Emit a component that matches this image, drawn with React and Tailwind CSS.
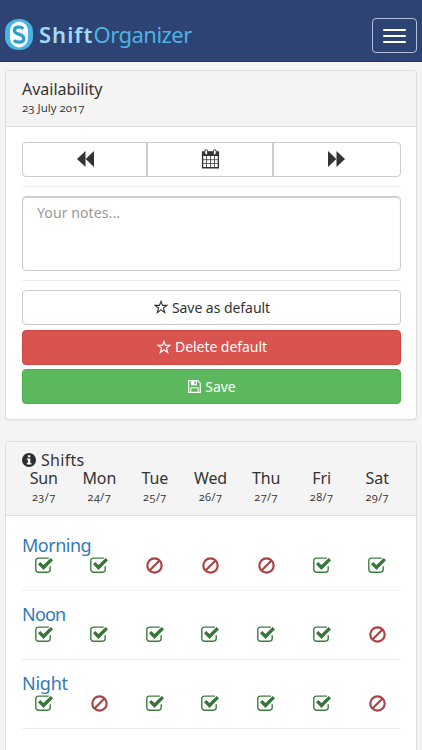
import { Fragment } from 'react';

const days = [
  { name: 'Sun', date: '23/7' },
  { name: 'Mon', date: '24/7' },
  { name: 'Tue', date: '25/7' },
  { name: 'Wed', date: '26/7' },
  { name: 'Thu', date: '27/7' },
  { name: 'Fri', date: '28/7' },
  { name: 'Sat', date: '29/7' },
];

const shifts = [
  { name: 'Morning', width: 'tracking-[-0.5px]', free: [true, true, false, false, false, true, true] },
  { name: 'Noon', width: 'tracking-[-0.8px]', free: [true, true, true, true, true, true, false] },
  { name: 'Night', width: 'tracking-[-0.25px]', free: [true, false, true, true, true, true, false] },
];

function LogoIcon() {
  return (
    <svg className="w-[28px] h-[31px] shrink-0" viewBox="0 0 28 31">
      <rect x="0" y="0" width="28" height="31" rx="13" fill="#48b4e4" />
      <rect x="5" y="2.5" width="18" height="26" rx="9" fill="#f4fbff" />
      <path d="M18.3 9.7C16.8 8.5 15.3 8 13.6 8c-2.6 0-4.2 1.3-4.2 3.4 0 4.7 9.4 3.2 9.4 8 0 2.4-2 3.8-4.8 3.8-2 0-3.8-.7-5.2-1.8" fill="none" stroke="#2d9dcb" strokeWidth="3.2" />
    </svg>
  );
}

function Backward({ className }) {
  return (
    <svg className={className} viewBox="0 0 17 16" fill="currentColor">
      <path d="M8.5 0v16L0 8zM17 0v16L8.7 8z" />
    </svg>
  );
}

function CalendarIcon() {
  return (
    <svg className="w-[19px] h-[20px] mb-[2px]" viewBox="0 0 20 20" preserveAspectRatio="none">
      <path d="M1.7 3h16.6v15.8H1.7z" fill="#fff" stroke="#333" strokeWidth="1.4" />
      <path d="M1 3h18v4H1z" fill="#333" />
      <path d="M5.8 7v11M10 7v11M14.2 7v11M1 10.7h18M1 14.4h18" stroke="#444" strokeWidth=".9" />
      <rect x="4" y=".7" width="3" height="5" rx="1.5" fill="#fff" stroke="#333" />
      <rect x="13" y=".7" width="3" height="5" rx="1.5" fill="#fff" stroke="#333" />
    </svg>
  );
}

function StarIcon() {
  return (
    <svg className="w-[14px] h-[14px] shrink-0" viewBox="0 0 14 14" fill="none" stroke="currentColor" strokeWidth="1.15">
      <path d="M7 1.4l1.5 4h4.4L9.4 8l1.3 4.5L7 9.9l-3.7 2.6L4.6 8 1.1 5.4h4.4z" />
    </svg>
  );
}

function SaveIcon() {
  return (
    <svg className="w-[13px] h-[13px] shrink-0" viewBox="0 0 13 13">
      <path d="M.7.7h9.1l2.5 2.5v9.1H.7z" fill="none" stroke="currentColor" strokeWidth="1.2" />
      <path d="M3 1h6v4.3H3z" fill="currentColor" />
      <path d="M6.5 1.5h1.4v2.8H6.5z" fill="#5cb85c" />
      <path d="M2.8 12V7.8h7.4V12" fill="none" stroke="currentColor" />
    </svg>
  );
}

function InfoIcon() {
  return (
    <svg className="w-[14px] h-[14px] shrink-0" viewBox="0 0 14 14">
      <circle cx="7" cy="7" r="7" fill="#2d2d2d" />
      <path d="M5.9 2.2h2.4v2H5.9zM4.8 5.4h3.5v4.7h1.1v1.5H4.8v-1.5h1.1V6.8H4.8z" fill="#fff" />
    </svg>
  );
}

function CheckIcon() {
  return (
    <svg className="w-[18px] h-[17px]" viewBox="0 0 18 17">
      <path d="M13.8 1.1H3.4A2.6 2.6 0 0 0 .8 3.7v8.9a2.6 2.6 0 0 0 2.6 2.6h9.2a2.6 2.6 0 0 0 2.6-2.6V9.2" fill="none" stroke="#3c7d40" strokeWidth="1.4" />
      <path d="M3 7.2l2.2-2.3 3.3 3 7.2-6.8L18 3.3l-9.5 9.6z" fill="#38753b" />
    </svg>
  );
}

function BanIcon() {
  return (
    <svg className="w-[17px] h-[17px]" viewBox="0 0 17 17" fill="none" stroke="#a94442" strokeWidth="2.2">
      <circle cx="8.5" cy="8.5" r="7.2" />
      <path d="M3.5 13.5l10-10" />
    </svg>
  );
}

export default function App() {
  return (
    <div className="h-[750px] overflow-hidden bg-[#f4f4f4] text-[#333] font-['Noto_Sans',sans-serif]">
      <header className="h-[62px] bg-[#2d4373] border-b border-[#293763] flex items-start justify-between pl-[5px] pr-[5px]">
        <div className="flex items-center pt-[19px]">
          <LogoIcon />
          <span className="ml-[6px] text-[22px] leading-[31px] text-[#50b2e2] whitespace-nowrap">
            <b className="font-semibold text-[#a1dafa] tracking-[1px]">Shift</b>
            <span className="tracking-[-0.52px]">Organizer</span>
          </span>
        </div>
        <button className="mt-[18px] w-[45px] h-[35px] rounded-[4px] border border-[#b3bfd8] flex flex-col items-center justify-center gap-[4px]">
          <span className="w-[23px] h-[2px] bg-white rounded-[1px]" />
          <span className="w-[23px] h-[2px] bg-white rounded-[1px]" />
          <span className="w-[23px] h-[2px] bg-white rounded-[1px]" />
        </button>
      </header>

      <section className="mt-[8px] ml-[5px] mr-[5px] h-[350px] rounded-[4px] border border-[#dedede] bg-white shadow-xs">
        <div className="h-[56px] rounded-t-[3px] bg-[#f4f4f4] border-b border-[#dedede] pl-[16px] pt-[8px]">
          <h3 className="text-[16px] leading-[21px] tracking-[-0.02px]">Availability</h3>
          <p className="font-['Open_Sans'] oldstyle-nums text-[11.5px] leading-[16px] tracking-[0.02px]">23 July 2017</p>
        </div>
        <div className="px-[15.5px] pt-[15px]">
          <div className="h-[35px] rounded-[4px] border border-[#ccc] grid grid-cols-3 divide-x-2 divide-[#ccc]">
            <button className="flex items-center justify-center pl-[2px]"><Backward className="w-[17px] h-[16px] mb-[2px]" /></button>
            <button className="flex items-center justify-center pl-px"><CalendarIcon /></button>
            <button className="flex items-center justify-center"><Backward className="w-[17px] h-[16px] mb-[2px] rotate-180" /></button>
          </div>
          <hr className="mt-[9px] border-[#eee]" />
          <textarea
            placeholder="Your notes..."
            className="mt-[9px] block w-full h-[75px] resize-none rounded-[4px] border border-[#ccc] shadow-[inset_0_1px_1px_#ccc] px-[14.5px] py-[6px] text-[14px] leading-[20px] tracking-[0.1px] placeholder:text-[#999]"
          />
          <hr className="mt-[9px] border-[#eee]" />
          <div className="mt-[9px] flex flex-col gap-[5px] text-[14px]">
            <button className="h-[35px] rounded-[4px] border border-[#ccc] bg-white flex items-center justify-center gap-[4px] pb-px pl-[2px] tracking-[-0.05px]">
              <StarIcon /> Save as default
            </button>
            <button className="h-[35px] rounded-[4px] border border-[#cf4541] bg-[#d9534f] text-white flex items-center justify-center gap-[4px] pb-[2px] pl-[2px] tracking-[-0.05px]">
              <StarIcon /> Delete default
            </button>
            <button className="-mt-px h-[35px] rounded-[4px] border border-[#4cae4c] bg-[#5cb85c] text-white flex items-center justify-center gap-[4px] pb-px pl-[2px] tracking-[-0.05px]">
              <SaveIcon /> Save
            </button>
          </div>
        </div>
      </section>

      <section className="mt-[21px] mx-[5px] h-[340px] rounded-t-[4px] border border-[#dedede] bg-white">
        <div className="h-[74px] rounded-t-[3px] bg-[#f4f4f4] border-b border-[#dedede] pt-[9px]">
          <div className="pl-[16px] h-[18px] flex items-center gap-[5px] text-[16px] leading-[18px] tracking-[0.3px]">
            <InfoIcon /> Shifts
          </div>
          <div className="ml-[10px] w-[389px] grid grid-cols-7 text-center">
            {days.map((d) => (
              <div key={d.name}>
                <div className="text-[16px] leading-[18px] tracking-[-0.1px]">{d.name}</div>
                <div className="font-['Open_Sans'] oldstyle-nums text-[11px] leading-[19px] tracking-[0.4px]">{d.date}</div>
              </div>
            ))}
          </div>
        </div>
        <div className="pt-[17px]">
          {shifts.map((s) => (
            <Fragment key={s.name}>
              <h4 className={`pl-[16px] h-[24px] text-[18px] leading-[24px] text-[#337ab7] ${s.width}`}>{s.name}</h4>
              <div className="ml-[10px] w-[389px] h-[17px] grid grid-cols-7 justify-items-center">
                {s.free.map((ok, i) => (ok ? <CheckIcon key={i} /> : <BanIcon key={i} />))}
              </div>
              <hr className="ml-[16px] mr-[15px] mt-[16px] mb-[11px] border-[#eee]" />
            </Fragment>
          ))}
        </div>
      </section>
    </div>
  );
}
